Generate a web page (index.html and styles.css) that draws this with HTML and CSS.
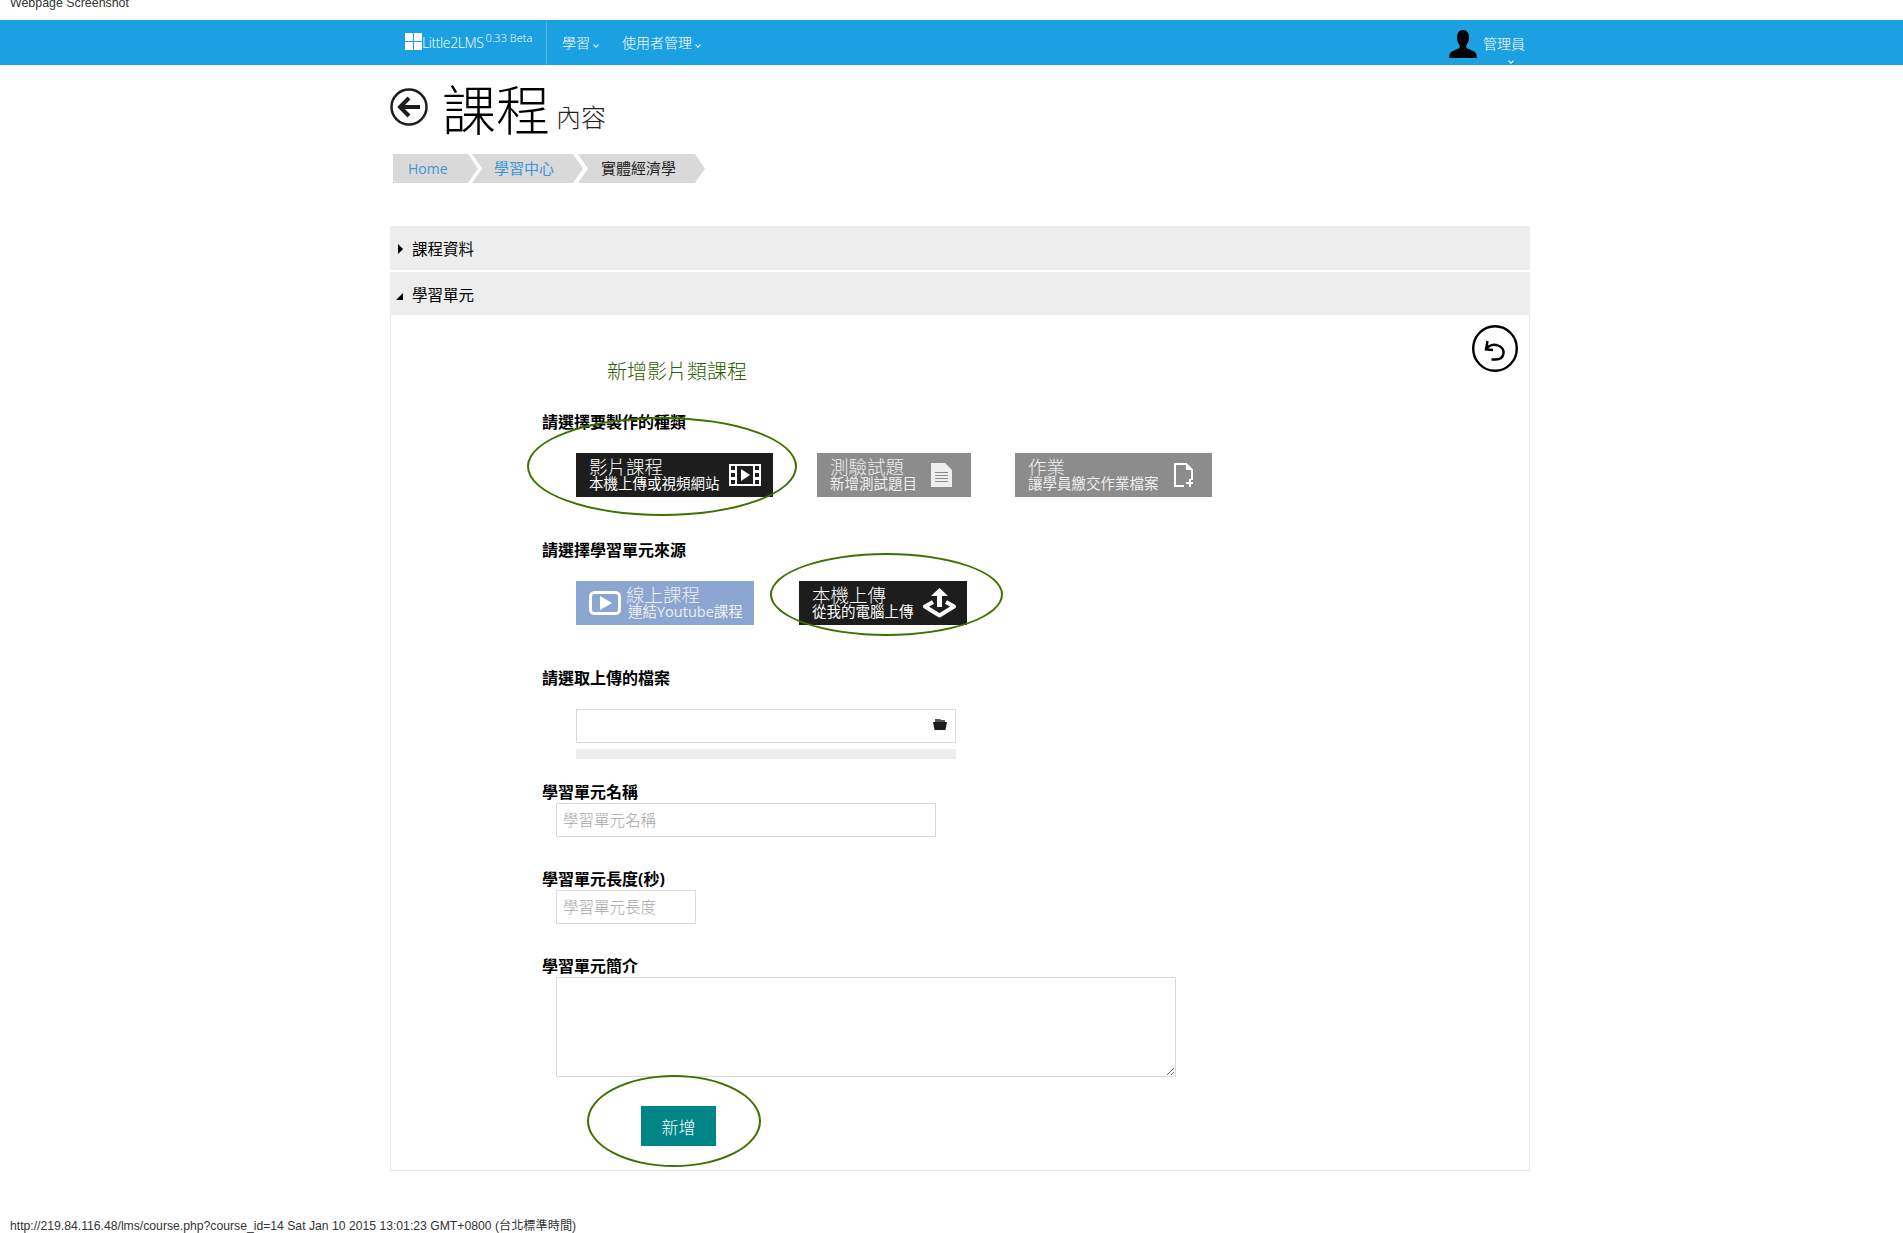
FILE: index.html
```html
<!DOCTYPE html>
<html lang="zh-Hant">
<head>
<meta charset="utf-8">
<title>課程內容</title>
<link rel="stylesheet" href="styles.css">
</head>
<body>
<div class="caption">Webpage Screenshot</div>
<nav class="navbar">
  <div class="brand">
    <svg class="logo" viewBox="0 0 17 17"><path fill="#fff" d="M0 0h8v8H0zM9 0h8v8H9zM0 9h8v8H0zM9 9h8v8H9z"/></svg>
    <span class="brand-name">Little2LMS</span>
    <span class="brand-ver">0.33 Beta</span>
  </div>
  <div class="nav-sep"></div>
  <a class="nav-item nav-first">學習<i class="chev"></i></a>
  <a class="nav-item">使用者管理<i class="chev"></i></a>
  <div class="nav-user">
    <svg class="user-icon" viewBox="0 0 28 28"><path fill="#000" d="M14 0c4 0 6 3.500 6 7.500 0 3-1 5.500-2.500 7.500-.5 1-.5 2.500 .5 3.300 2.500 1.500 7.500 2.500 9 5.200 .6 1.200 .8 3 1 4.500H0c.2-1.500 .4-3.300 1-4.500 1.500-2.700 6.500-3.700 9-5.200 1-.8 1-2.300 .5-3.300C9 13 8 10.500 8 7.500 8 3.500 10 0 14 0z"/></svg>
    <span class="user-name">管理員</span>
    <i class="chev user-chev"></i>
  </div>
</nav>

<main class="main">
  <header class="title-row">
    <svg class="back-icon" viewBox="0 0 38 38"><circle cx="19" cy="19" r="17.500" fill="none" stroke="#1d1d1d" stroke-width="2.500"/><path fill="none" stroke="#1d1d1d" stroke-width="4" d="M30 19H11M19 10l-9 9 9 9"/></svg>
    <h1 class="title">課程</h1>
    <span class="subtitle">內容</span>
  </header>

  <ol class="crumbs">
    <li class="crumb crumb-first"><a>Home</a></li>
    <li class="crumb crumb-second"><a>學習中心</a></li>
    <li class="crumb crumb-last">實體經濟學</li>
  </ol>

  <section class="accordion">
    <div class="acc-head acc-closed"><i class="tri-right"></i>課程資料</div>
    <div class="acc-head acc-open"><i class="tri-down"></i>學習單元</div>
    <div class="panel">
      <svg class="revert-icon" viewBox="0 0 46 47"><ellipse cx="23" cy="23.500" rx="21.800" ry="22.300" fill="none" stroke="#000" stroke-width="2.400"/><path fill="none" stroke="#000" stroke-width="2.400" d="M14 24c3-4 8-5 12-3.500 4 1.500 6 4.500 5.500 8-.5 3.500-3.500 6-8 6h-4M15.500 16l-1.500 8.500 7 .5"/></svg>
      <h2 class="panel-title">新增影片類課程</h2>

      <div class="label label-first">請選擇要製作的種類</div>
      <div class="cmd-row cmd-row-a">
        <a class="cmd cmd-dark cmd-video">
          <span class="cmd-text"><b class="cmd-main">影片課程</b><small class="cmd-sub">本機上傳或視頻網站</small></span>
          <svg class="cmd-icon film" viewBox="0 0 32 22"><path fill="#fff" fill-rule="evenodd" d="M0 0h32v22H0zM2 2v4h4V2zM2 9v4h4V9zM2 16v4h4v-4zM26 2v4h4V2zM26 9v4h4V9zM26 16v4h4v-4zM8 2v18h16V2z"/><path fill="#fff" d="M12 5l9 6-9 6z"/></svg>
        </a>
        <a class="cmd cmd-grey cmd-quiz">
          <span class="cmd-text"><b class="cmd-main">測驗試題</b><small class="cmd-sub">新增測試題目</small></span>
          <svg class="cmd-icon doc" viewBox="0 0 21 24"><path fill="#eee" fill-rule="evenodd" d="M0 0h14l7 7v17H0zM4 9v1h13V9zM4 12v1h13v-1zM4 15v1h13v-1zM4 18v1h13v-1z"/></svg>
        </a>
        <a class="cmd cmd-grey cmd-work">
          <span class="cmd-text"><b class="cmd-main">作業</b><small class="cmd-sub">讓學員繳交作業檔案</small></span>
          <svg class="cmd-icon doc-add" viewBox="0 0 19 24"><path fill="none" stroke="#fff" stroke-width="2" d="M10 23H1V1h11l6 6v10"/><path fill="#fff" d="M12 0l7 7h-7z"/><path fill="#fff" d="M12 19h3v-3h2v3h2v2h-2v3h-2v-3h-3z"/></svg>
        </a>
        <span class="mark mark-a"></span>
      </div>

      <div class="label label-next">請選擇學習單元來源</div>
      <div class="cmd-row cmd-row-b">
        <a class="cmd cmd-blue cmd-online">
          <svg class="cmd-icon play" viewBox="0 0 32 24"><rect x="1.500" y="1.500" width="29" height="21" rx="4" fill="none" stroke="#fff" stroke-width="3"/><path fill="#fff" d="M11 5l12 7-12 7z"/></svg>
          <span class="cmd-text"><b class="cmd-main">線上課程</b><small class="cmd-sub cmd-sub-in">連結Youtube課程</small></span>
        </a>
        <a class="cmd cmd-dark cmd-local">
          <span class="cmd-text"><b class="cmd-main">本機上傳</b><small class="cmd-sub">從我的電腦上傳</small></span>
          <svg class="cmd-icon upload" viewBox="0 0 33 30"><path fill="none" stroke="#fff" stroke-width="4" stroke-linejoin="round" d="M10 14l-8 4.500 14.500 9 14.500-9-8-4.500"/><path fill="#fff" d="M16.500 0L25 8h-6v11h-5V8H8z"/></svg>
        </a>
        <span class="mark mark-b"></span>
      </div>

      <div class="label label-file">請選取上傳的檔案</div>
      <div class="file-box">
        <svg class="folder" viewBox="0 0 14 11"><path fill="#555" d="M2 0h5l1 1h4v3H2z"/><path fill="#1d1d1d" d="M0 3h14l-1.500 8h-11z"/></svg>
      </div>
      <div class="progress"></div>

      <label class="label label-name">學習單元名稱</label>
      <input class="field field-name" type="text" placeholder="學習單元名稱">

      <label class="label label-len">學習單元長度(秒)</label>
      <input class="field field-len" type="text" placeholder="學習單元長度">

      <label class="label label-intro">學習單元簡介</label>
      <textarea class="field field-intro"></textarea>

      <div class="submit-row">
        <button class="submit" type="button">新增</button>
        <span class="mark mark-c"></span>
      </div>
    </div>
  </section>
</main>

<footer class="foot">http://219.84.116.48/lms/course.php?course_id=14 Sat Jan 10 2015 13:01:23 GMT+0800 (台北標準時間)</footer>
</body>
</html>
```
FILE: styles.css
```css
* { box-sizing: border-box; }
html, body { margin: 0; padding: 0; background: #fff; }
body {
  height: 1233px;
  overflow: hidden;
  font-family: "Open Sans", "Noto Sans CJK TC", sans-serif;
  color: #000;
}
a { color: inherit; text-decoration: none; }

.caption {
  height: 20px;
  padding-left: 10px;
  font: 12.400px/6px "Liberation Sans", sans-serif;
  color: #333;
}

.navbar {
  height: 45px;
  background: #1ba1e2;
  color: #fff;
  display: flex;
  align-items: center;
  padding-left: 405px;
  font-size: 14px;
  font-weight: 300;
}
.brand { display: flex; align-items: center; width: 141px; }
.logo { width: 17px; height: 17px; flex: none; margin-top: -2px; }
.brand-name { font-size: 14px; letter-spacing: -.4px; margin-top: -1px; }
.brand-ver { font-size: 11px; margin: -10px 0 0 2px; }
.nav-sep { width: 1px; height: 45px; background: #4fb6e8; }
.nav-item { display: flex; align-items: center; margin-left: 24px; line-height: 20px; }
.nav-first { margin-left: 15px; }
.chev {
  width: 4px; height: 4px;
  margin: 4px 0 0 4px;
  border-right: 1px solid #fff;
  border-bottom: 1px solid #fff;
  transform: rotate(45deg);
}
.nav-user { display: flex; align-items: center; margin-left: 749px; position: relative; }
.user-icon { width: 28px; height: 28px; margin-top: 3px; }
.user-name { margin-left: 6px; margin-top: 0; }
.user-chev { position: absolute; right: 12px; top: 32px; margin: 0; }

.main { padding-left: 390px; width: 1530px; }
.title-row { display: flex; height: 89px; }
.back-icon { width: 38px; height: 38px; margin-top: 23px; flex: none; }
.title {
  margin: 12px 0 0 14px;
  font-size: 54px;
  line-height: 66px;
  font-weight: 300;
}
.subtitle { margin: 39px 0 0 6px; font-size: 25px; line-height: 26px; font-weight: 300; color: #222; }

.crumbs { list-style: none; display: flex; margin: 0 0 0 3px; padding: 0; height: 29px; }
.crumb {
  height: 29px;
  background: #d9d9d9;
  font-size: 15px;
  line-height: 29px;
  font-weight: 400;
  color: #222;
  clip-path: polygon(0 0, calc(100% - 10px) 0, 100% 50%, calc(100% - 10px) 100%, 0 100%, 10px 50%);
}
.crumb a { color: #3b97d3; }
.crumb-first {
  width: 85px; padding-left: 15px; font-size: 14px;
  clip-path: polygon(0 0, calc(100% - 10px) 0, 100% 50%, calc(100% - 10px) 100%, 0 100%);
}
.crumb-second { width: 111px; margin-left: -6px; padding-left: 22px; }
.crumb-last { width: 127px; margin-left: -5px; padding-left: 23px; }

.accordion { margin-top: 43px; }
.acc-head {
  height: 44px;
  background: #ededed;
  font-size: 15.500px;
  line-height: 46px;
  padding-left: 22px;
  position: relative;
  font-weight: 400;
}
.acc-open { margin-top: 2px; height: 43px; line-height: 47px; }
.tri-right {
  position: absolute; left: 8px; top: 18px;
  border-left: 5px solid #000;
  border-top: 5px solid transparent;
  border-bottom: 5px solid transparent;
}
.tri-down {
  position: absolute; left: 6px; top: 21px;
  border-right: 7px solid #000;
  border-top: 7px solid transparent;
}

.panel {
  position: relative;
  height: 856px;
  padding: 43px 0 0 151px;
  border: 1px solid #e8e8e8;
  border-top: 0;
}
.revert-icon { position: absolute; right: 11px; top: 10px; width: 46px; height: 47px; }
.panel-title {
  margin: 0 0 0 65px;
  font-size: 20px;
  line-height: 28px;
  font-weight: 300;
  color: #2f6000;
}
.label { display: block; font-size: 16px; line-height: 20px; font-weight: 700; }
.label-first { margin-top: 26px; }
.label-next { margin-top: 43px; }
.label-file { margin-top: 43px; }
.label-name { margin-top: 23px; }
.label-len { margin-top: 32px; }
.label-intro { margin-top: 32px; }

.cmd-row { position: relative; display: flex; margin: 21px 0 0 34px; gap: 44px; }
.cmd-row-b { gap: 45px; }
.cmd {
  height: 44px;
  display: flex;
  justify-content: space-between;
  align-items: center;
  padding-left: 13px;
  color: #fff;
}
.cmd-dark { background: #1d1d1d; }
.cmd-grey { background: #8c8c8c; color: #eee; }
.cmd-blue { background: #8aa6d1; color: #eee; justify-content: flex-start; }
.cmd-video { width: 197px; padding-right: 12px; }
.cmd-quiz { width: 154px; padding-right: 19px; }
.cmd-work { width: 197px; padding-right: 19px; }
.cmd-online { width: 178px; }
.cmd-local { width: 168px; padding-right: 11px; }
.cmd-text { display: flex; flex-direction: column; margin-top: -2px; }
.cmd-main { font-size: 18.500px; line-height: 18px; font-weight: 300; }
.cmd-sub { font-size: 14.500px; line-height: 14px; font-weight: 400; margin-top: 1px; }
.cmd-sub-in { margin-left: 2px; }
.cmd-icon { flex: none; }
.film { width: 32px; height: 22px; }
.doc { width: 21px; height: 24px; }
.doc-add { width: 19px; height: 24px; }
.play { width: 32px; height: 24px; margin-right: 5px; }
.upload { width: 33px; height: 30px; margin-top: -1px; }

.mark {
  position: absolute;
  border: 2px solid #3f7000;
  border-radius: 50%;
  pointer-events: none;
}
.mark-a { left: -49px; top: -36px; width: 270px; height: 99px; }
.mark-b { left: 194px; top: -28px; width: 233px; height: 83px; }
.mark-c { left: -54px; top: -31px; width: 174px; height: 92px; }

.file-box {
  position: relative;
  width: 380px;
  height: 34px;
  margin: 21px 0 0 34px;
  border: 1px solid #d9d9d9;
}
.folder { position: absolute; right: 8px; top: 9px; width: 14px; height: 11px; }
.progress { width: 380px; height: 10px; margin: 6px 0 0 34px; background: #eee; }

.field {
  display: block;
  margin: 1px 0 0 14px;
  height: 34px;
  padding: 0 6px 2px;
  border: 1px solid #d9d9d9;
  border-radius: 0;
  background: #fff;
  font: 300 15.500px "Noto Sans CJK TC", sans-serif;
  outline: 0;
}
.field::placeholder { color: #a6a6a6; opacity: 1; }
.field-name { width: 380px; }
.field-len { width: 140px; }
.field-intro { width: 620px; height: 100px; margin-top: 1px; padding: 6px; }

.submit-row { position: relative; margin: 29px 0 0 99px; height: 40px; }
.submit {
  display: block;
  width: 75px;
  height: 40px;
  padding: 0;
  border: 0;
  background: #008587;
  color: #fff;
  font: 300 17px "Noto Sans CJK TC", sans-serif;
}

.foot {
  margin-top: 49px;
  padding-left: 10px;
  font: 12.200px/12px "Liberation Sans", "Noto Sans CJK TC", sans-serif;
  color: #333;
}
```
